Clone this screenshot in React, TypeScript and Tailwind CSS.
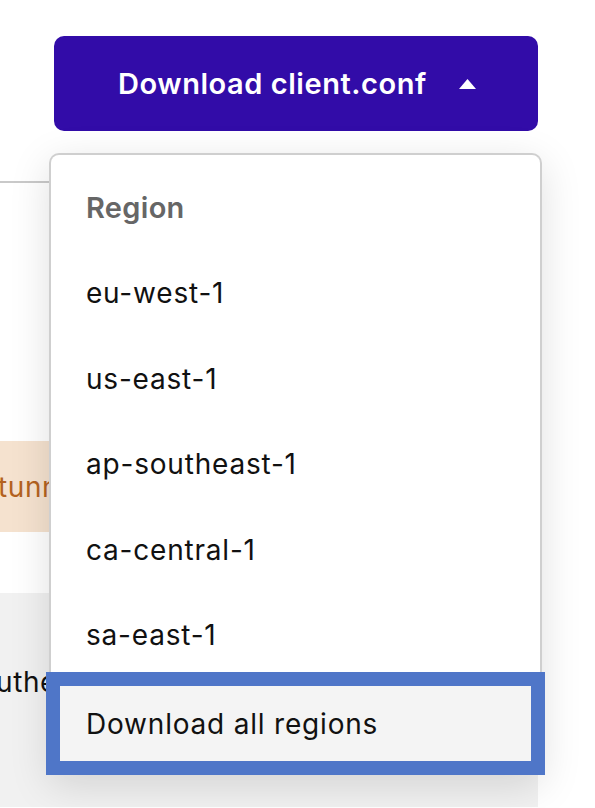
import React from 'react';

const regions = ['eu-west-1', 'us-east-1', 'ap-southeast-1', 'ca-central-1', 'sa-east-1'];

const App = () => {
  return (
    <div className="relative w-[595px] h-[808px] overflow-hidden bg-white font-['Inter','Liberation_Sans',sans-serif]">
      {/* page underneath */}
      <div className="flex flex-col">
        <div className="pl-[54px] pt-[36px]">
          <button className="flex items-center w-[484px] h-[95px] rounded-[10px] bg-[#320ca8] pl-[64px] text-white">
            <span className="text-[29px] font-semibold tracking-[0.55px]">Download client.conf</span>
            <svg className="ml-[32px]" width="17" height="10" viewBox="0 0 17 10">
              <path d="M0 10 L8.5 0 L17 10 Z" fill="white" />
            </svg>
          </button>
        </div>
        <div className="mt-[50px] w-[538px] h-[2px] bg-[#c9c9c9]" />
        <div className="mt-[258px] w-[538px] h-[91px] bg-[#f5e2cf] flex items-center">
          <span className="-ml-[2px] text-[28px] text-[#b4621f] tracking-[0.6px]">tunnel is active</span>
        </div>
        <div className="mt-[61px] w-[538px] h-[214px] bg-[#f1f1f1] pt-[68px]">
          <span className="-ml-[4px] text-[28px] text-[#111] tracking-[0.6px]">uthenticated</span>
        </div>
      </div>

      {/* dropdown menu */}
      <div className="absolute left-[49px] top-[153px] w-[493px] h-[622px] rounded-t-[10px] border-2 border-b-0 border-[#cfcfcf] bg-white shadow-[0_10px_40px_rgba(0,0,0,0.13)]">
        <div className="flex flex-col pt-[10px]">
          <div className="h-[85.5px] flex items-center pl-[35px] text-[29px] font-semibold text-[#666666] tracking-[0.3px]">
            Region
          </div>
          {regions.map((r) => (
            <div key={r} className="h-[85.5px] flex items-center pl-[35px] text-[28px] text-[#111111] tracking-[0.8px]">
              {r}
            </div>
          ))}
          <div className="-mx-[5px] -mt-[6px] h-[103px] border-[14px] border-[#4f76c8] bg-[#f4f4f4] flex items-center pl-[26px] text-[28px] text-[#111111] tracking-[0.8px]">
            Download all regions
          </div>
        </div>
      </div>
    </div>
  );
};

export default App;
